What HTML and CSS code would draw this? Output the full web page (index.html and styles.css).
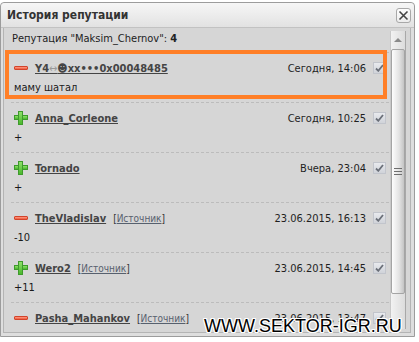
FILE: index.html
```html
<!DOCTYPE html>
<html lang="ru">
<head>
  <meta charset="UTF-8">
  <title>История репутации</title>
  <link rel="stylesheet" href="styles.css">
</head>
<body>
  <div class="dialog">
    <div class="titlebar">
      <span class="title">История репутации</span>
      <span class="close">
        <svg width="11" height="11" viewBox="0 0 11 11"><path d="M1.5 1.5 L9.5 9.5 M9.5 1.5 L1.5 9.5" stroke="#444" stroke-width="1.6" fill="none"/></svg>
      </span>
    </div>
    <div class="content">
      <div class="list">
        <div class="summary">Репутация "Maksim_Chernov": <b>4</b></div>

        <div class="item marked">
          <div class="head">
            <span class="icon minus"></span>
            <a class="user" href="#">Y4<span class="odd">↔</span>☻xx•••0x00048485</a>
            <span class="date">Сегодня, 14:06</span>
            <span class="check"><svg width="9" height="8" viewBox="0 0 9 8"><path d="M1 4.5 L3.3 6.8 L8 1" stroke="#6b7079" stroke-width="1.8" fill="none"/></svg></span>
          </div>
          <div class="comment">маму шатал</div>
        </div>

        <div class="item">
          <div class="head">
            <span class="icon plus"></span>
            <a class="user" href="#">Anna_Corleone</a>
            <span class="date">Сегодня, 10:25</span>
            <span class="check"><svg width="9" height="8" viewBox="0 0 9 8"><path d="M1 4.5 L3.3 6.8 L8 1" stroke="#6b7079" stroke-width="1.8" fill="none"/></svg></span>
          </div>
          <div class="comment">+</div>
        </div>

        <div class="item">
          <div class="head">
            <span class="icon plus"></span>
            <a class="user" href="#">Tornado</a>
            <span class="date">Вчера, 23:04</span>
            <span class="check"><svg width="9" height="8" viewBox="0 0 9 8"><path d="M1 4.5 L3.3 6.8 L8 1" stroke="#6b7079" stroke-width="1.8" fill="none"/></svg></span>
          </div>
          <div class="comment">+</div>
        </div>

        <div class="item">
          <div class="head">
            <span class="icon minus"></span>
            <a class="user" href="#">TheVladislav</a>
            <span class="source">[<a href="#">Источник</a>]</span>
            <span class="date">23.06.2015, 16:13</span>
            <span class="check"><svg width="9" height="8" viewBox="0 0 9 8"><path d="M1 4.5 L3.3 6.8 L8 1" stroke="#6b7079" stroke-width="1.8" fill="none"/></svg></span>
          </div>
          <div class="comment">-10</div>
        </div>

        <div class="item">
          <div class="head">
            <span class="icon plus"></span>
            <a class="user" href="#">Wero2</a>
            <span class="source">[<a href="#">Источник</a>]</span>
            <span class="date">23.06.2015, 14:45</span>
            <span class="check"><svg width="9" height="8" viewBox="0 0 9 8"><path d="M1 4.5 L3.3 6.8 L8 1" stroke="#6b7079" stroke-width="1.8" fill="none"/></svg></span>
          </div>
          <div class="comment">+11</div>
        </div>

        <div class="item">
          <div class="head">
            <span class="icon minus"></span>
            <a class="user" href="#">Pasha_Mahankov</a>
            <span class="source">[<a href="#">Источник</a>]</span>
            <span class="date">23.06.2015, 13:47</span>
            <span class="check"><svg width="9" height="8" viewBox="0 0 9 8"><path d="M1 4.5 L3.3 6.8 L8 1" stroke="#6b7079" stroke-width="1.8" fill="none"/></svg></span>
          </div>
        </div>
      </div>

      <div class="scrollbar">
        <div class="arrow"></div>
        <div class="thumb"><span class="grip"></span></div>
      </div>
    </div>
  </div>

  <div class="watermark">WWW.SEKTOR-IGR.RU</div>
</body>
</html>
```

FILE: styles.css
```css
body {
  margin: 0;
  width: 419px;
  height: 342px;
  overflow: hidden;
  position: relative;
  background: #fff;
  font-family: Tahoma, "DejaVu Sans Condensed", "DejaVu Sans", sans-serif;
  font-size: 11px;
  color: #1e1e1e;
}
.dialog {
  margin-top: 2px;
  width: 413px;
  height: 333px;
  border: 1px solid #9c9c9c;
  border-radius: 4px 4px 0 0;
  background: #dedede;
  display: flex;
  flex-direction: column;
}
.titlebar {
  height: 24px;
  flex-shrink: 0;
  display: flex;
  align-items: center;
  justify-content: space-between;
  padding: 0 3px 0 6px;
  background: linear-gradient(#f6f6f6, #e2e2e2);
  border-bottom: 1px solid #c2c2c2;
  border-radius: 4px 4px 0 0;
}
.title {
  font-size: 12px;
  font-weight: bold;
  color: #333;
}
.close {
  width: 13px;
  height: 13px;
  border: 1px solid #a8a8a8;
  border-radius: 3px;
  background: linear-gradient(#fdfdfd, #ececec);
  display: flex;
  align-items: center;
  justify-content: center;
}
.content {
  flex: 1;
  min-height: 0;
  display: flex;
  margin: 0 3px 3px 2px;
  padding-right: 4px;
  background: #d6d6d6;
  border: 1px solid #b4b4b4;
  border-top: none;
}
.list {
  flex: 1;
  overflow: hidden;
}
.summary {
  height: 23px;
  padding: 1px 0 0 8px;
  line-height: 20px;
  color: #222;
}
.item {
  position: relative;
  margin-left: 7px;
  padding: 5px 3px 4px 3px;
  border-top: 1px dashed #bcbcbc;
}
.marked::after {
  content: "";
  position: absolute;
  top: -3px;
  left: -6px;
  width: 374px;
  height: 41px;
  border: 4px solid #ff7f27;
}
.head {
  display: flex;
  align-items: center;
  height: 20px;
}
.icon {
  width: 14px;
  height: 14px;
  margin-right: 7px;
  flex-shrink: 0;
  position: relative;
}
.minus::before {
  content: "";
  position: absolute;
  left: 0;
  top: 5px;
  width: 12px;
  height: 2px;
  border: 1px solid #d2442b;
  border-radius: 1px;
  background: linear-gradient(#ff9c86, #f05a3c);
}
.plus::before,
.plus::after {
  content: "";
  position: absolute;
  border: 1px solid #3e9a2c;
  background: linear-gradient(#8ee06a, #4bb82d);
}
.plus::before {
  left: 0;
  top: 4px;
  width: 12px;
  height: 3px;
}
.plus::after {
  left: 4px;
  top: 0;
  width: 3px;
  height: 12px;
}
.user {
  font-weight: bold;
  color: #444;
  text-decoration: underline;
}
.odd {
  color: #999;
  font-weight: normal;
}
.source {
  margin-left: 7px;
  font-size: 10px;
  color: #333;
}
.source a {
  color: #56606e;
}
.date {
  margin-left: auto;
  color: #1f1f1f;
}
.check {
  margin-left: 7px;
  width: 11px;
  height: 10px;
  border: 1px solid #c2c5cc;
  background: linear-gradient(#e8eaee, #d0d3d9);
  display: flex;
  align-items: center;
  justify-content: center;
}
.comment {
  height: 20px;
  line-height: 20px;
  color: #1a1a1a;
}
.scrollbar {
  width: 14px;
  margin: 3px 0 3px 1px;
  background: linear-gradient(90deg, #f2f2f2, #dcdcdc);
  border-left: 1px solid #c8c8c8;
  border-right: 1px solid #a8a8a8;
  display: flex;
  flex-direction: column;
}
.arrow {
  height: 18px;
  display: flex;
  align-items: center;
  justify-content: center;
}
.arrow::before {
  content: "";
  border: 4px solid transparent;
  border-bottom: 4px solid #8a8a8a;
  border-top: none;
}
.thumb {
  height: 243px;
  border: 1px solid #a4a4a4;
  border-radius: 2px;
  background: linear-gradient(90deg, #fdfdfd, #e2e2e2 60%, #c4c4c4);
  display: flex;
  align-items: center;
  justify-content: center;
}
.grip {
  width: 8px;
  height: 7px;
  background: repeating-linear-gradient(#6e6e6e 0 1px, transparent 1px 3px);
}
.watermark {
  position: absolute;
  left: 204px;
  top: 316px;
  font-family: "Liberation Sans", Arial, sans-serif;
  font-size: 18px;
  line-height: 20px;
  color: #000;
  text-shadow: 1px 0 #fff, -1px 0 #fff, 0 1px #fff, 0 -1px #fff, 1px 1px #fff, -1px -1px #fff, 1px -1px #fff, -1px 1px #fff;
}
```
